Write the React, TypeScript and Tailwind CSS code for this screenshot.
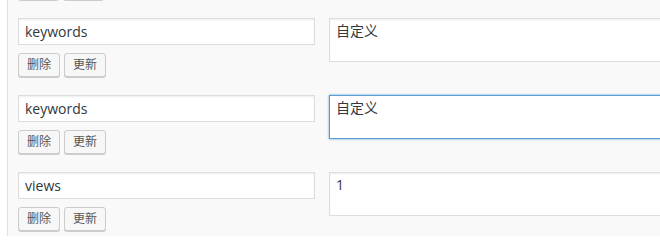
const rows = [
  { key: "keywords", value: "自定义", focused: false },
  { key: "keywords", value: "自定义", focused: true },
  { key: "views", value: "1", focused: false },
];

const font = "font-['Open_Sans','Noto_Sans_CJK_SC',sans-serif]";
const btn = `h-[24px] whitespace-nowrap rounded-[3px] border border-[#ccc] bg-[#f7f7f7] px-[8px] text-[12px] leading-[22px] text-[#555] shadow-[0_1px_0_#ccc] ${font}`;

function MetaRow({ name, value, focused }: { name: string; value: string; focused: boolean }) {
  return (
    <div className="flex items-start pt-[18px]">
      <div className="flex w-[297px] shrink-0 flex-col">
        <input
          readOnly
          value={name}
          className={`h-[27px] w-full border border-[#ddd] bg-white px-[6px] text-[14px] text-[#32373c] shadow-[inset_0_1px_2px_rgba(0,0,0,0.07)] outline-none ${font}`}
        />
        <div className="mt-[8px] flex gap-[4px]">
          <button className={btn}>删除</button>
          <button className={btn}>更新</button>
        </div>
      </div>
      <textarea
        readOnly
        value={value}
        className={`ml-[14px] h-[44px] w-[360px] shrink-0 resize-none bg-white px-[6px] py-[2px] text-[14px] leading-[20px] text-[#32373c] outline-none ${font} ${
          focused
            ? "border border-[#5b9dd9] shadow-[0_0_2px_rgba(30,140,190,0.8)]"
            : "border border-[#ddd] shadow-[inset_0_1px_2px_rgba(0,0,0,0.07)]"
        }`}
      />
    </div>
  );
}

export default function App() {
  return (
    <div className="h-[240px] w-[660px] overflow-hidden bg-white">
      <div className="ml-[7px] h-[260px] border-l border-[#e1e1e1] bg-[#f9f9f9] pl-[10px]">
        {/* bottom edge of the previous row's buttons */}
        <div className="-mt-[24px] flex gap-[4px]" aria-hidden>
          <div className={`${btn} w-[41px]`} />
          <div className={`${btn} w-[41px]`} />
        </div>
        {rows.map((r, i) => (
          <MetaRow key={i} name={r.key} value={r.value} focused={r.focused} />
        ))}
      </div>
    </div>
  );
}
